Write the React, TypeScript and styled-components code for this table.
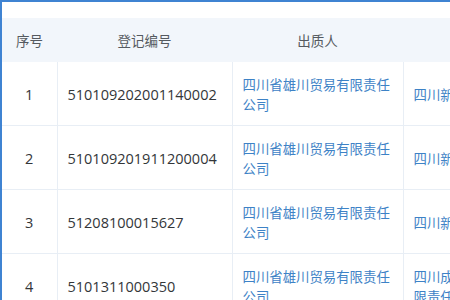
import React from 'react';
import styled, { createGlobalStyle } from 'styled-components';

const GlobalStyle = createGlobalStyle`
    html, body {
        margin: 0;
        padding: 0;
        background: #ffffff;
        overflow: hidden;
    }
`;

const Frame = styled.div`
    width: 450px;
    height: 300px;
    box-sizing: border-box;
    border-top: 2px solid #3f83d2;
    border-left: 2px solid #3f83d2;
    padding-top: 16px;
    overflow: hidden;
    background: #ffffff;
`;

const Table = styled.table`
    border-collapse: collapse;
    table-layout: fixed;
    width: 620px;
    font-family: 'Open Sans', 'Noto Sans CJK SC', sans-serif;
`;

const Th = styled.th`
    height: 44px;
    padding: 0;
    background: #f2f6fb;
    color: #555a60;
    font-weight: 400;
    font-size: 13.5px;
    text-align: center;
    font-family: 'Noto Sans CJK SC', sans-serif;
`;

const Td = styled.td<{ $center?: boolean }>`
    height: 63px;
    padding: 0 10px;
    border-right: 1px solid #e8eef5;
    border-bottom: 1px solid #e8eef5;
    text-align: ${({ $center }) => ($center ? 'center' : 'left')};
    vertical-align: middle;
`;

const Num = styled.span`
    font-family: 'Open Sans', sans-serif;
    font-size: 14.5px;
    color: #333639;
`;

const Party = styled.span`
    display: block;
    font-family: 'Noto Sans CJK SC', sans-serif;
    font-size: 13.4px;
    line-height: 20px;
    color: #3d82c6;
`;

const rows = [
    { no: '1', code: '510109202001140002', pledgor: '四川省雄川贸易有限责任公司', pledgee: '四川新网银行股份有限公司' },
    { no: '2', code: '510109201911200004', pledgor: '四川省雄川贸易有限责任公司', pledgee: '四川新网银行股份有限公司' },
    { no: '3', code: '51208100015627', pledgor: '四川省雄川贸易有限责任公司', pledgee: '四川新网银行股份有限公司' },
    { no: '4', code: '5101311000350', pledgor: '四川省雄川贸易有限责任公司', pledgee: '四川成都农村商业银行股份有\n限责任公司' },
];

const App = () => (
    <>
        <GlobalStyle />
        <Frame>
            <Table>
                <colgroup>
                    <col style={{ width: 55 }} />
                    <col style={{ width: 175 }} />
                    <col style={{ width: 171 }} />
                    <col style={{ width: 219 }} />
                </colgroup>
                <thead>
                    <tr>
                        <Th>序号</Th>
                        <Th>登记编号</Th>
                        <Th>出质人</Th>
                        <Th>质权人</Th>
                    </tr>
                </thead>
                <tbody>
                    {rows.map((row) => (
                        <tr key={row.no}>
                            <Td $center>
                                <Num>{row.no}</Num>
                            </Td>
                            <Td>
                                <Num>{row.code}</Num>
                            </Td>
                            <Td>
                                <Party>{row.pledgor}</Party>
                            </Td>
                            <Td>
                                {row.pledgee.split('\n').map((line) => (
                                    <Party key={line}>{line}</Party>
                                ))}
                            </Td>
                        </tr>
                    ))}
                </tbody>
            </Table>
        </Frame>
    </>
);

export default App;
